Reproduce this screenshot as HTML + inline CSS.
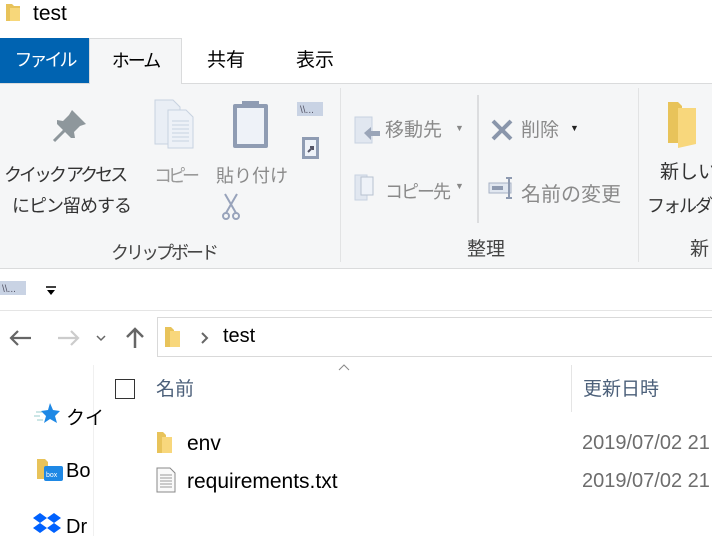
<!DOCTYPE html>
<html><head><meta charset="utf-8"><style>
*{margin:0;padding:0;box-sizing:border-box}
body{width:712px;height:536px;overflow:hidden;background:#fff;position:relative;font-family:"Liberation Sans","Noto Sans CJK JP",sans-serif;color:#000}
.a{position:absolute;white-space:nowrap}
.g{color:#6d6d6d}
.f{font-size:19px;line-height:22px}
</style></head><body>
<svg class="a" style="left:4px;top:3px" width="18" height="20"><path d="M2 1h6l2 2h6v15H2z" fill="#e8c35a"/><path d="M6 5h10v13H6z" fill="#f7d77a"/></svg>
<div class="a" style="left:33px;top:2px;font-size:21px">test</div>
<div class="a" style="left:0;top:38px;width:89px;height:45px;background:#0063b1;color:#fff;font-size:18px;letter-spacing:-3px;line-height:45px;text-align:center">ファイル</div>
<div class="a" style="left:89px;top:38px;width:93px;height:46px;background:#f5f6f7;border:1px solid #dadbdc;border-bottom:none;font-size:18px;letter-spacing:-2px;line-height:44px;text-align:center;z-index:2">ホーム</div>
<div class="a f" style="left:207px;top:50px">共有</div>
<div class="a f" style="left:296px;top:50px">表示</div>
<div class="a" style="left:0;top:83px;width:712px;height:186px;background:#f5f6f7;border-top:1px solid #dadbdc;border-bottom:1px solid #dadbdc"></div>
<div class="a" style="left:340px;top:88px;width:1px;height:174px;background:#e2e3e4"></div>
<div class="a" style="left:638px;top:88px;width:1px;height:174px;background:#e2e3e4"></div>
<div class="a" style="left:477px;top:95px;width:2px;height:128px;background:#dcdddf"></div>
<svg class="a" style="left:50px;top:105px" width="42" height="38"><path d="M4 36L18 22" stroke="#8e979c" stroke-width="3"/><path d="M22 5l14 14-6 2-6 6 1 6-4 0-14-14 0-4 6 1 6-6z" fill="#8e979c"/></svg>
<div class="a" style="left:4px;top:161px;font-size:18px;letter-spacing:-3px;color:#333">クイック アクセス</div>
<div class="a" style="left:12px;top:192px;font-size:18px;letter-spacing:-1px;color:#333">にピン留めする</div>
<svg class="a" style="left:154px;top:99px" width="45" height="50"><path d="M1 1h18l7 7v37H1z" fill="#e9eef5" stroke="#c8d2e0"/><path d="M14 11h18l7 7v31H14z" fill="#edf1f7" stroke="#c8d2e0"/><g stroke="#c8d2e0"><path d="M18 22h17M18 26h17M18 30h17M18 34h17M18 38h17M18 42h17"/></g></svg>
<div class="a" style="left:154px;top:162px;font-size:18px;letter-spacing:-4px;color:#9a9a9a">コピー</div>
<svg class="a" style="left:232px;top:98px" width="38" height="52"><rect x="1" y="6" width="35" height="44" rx="2" fill="#8f9cb3"/><rect x="5" y="10" width="27" height="36" fill="#eef2f8"/><rect x="10" y="3" width="17" height="6" fill="#8f9cb3"/></svg>
<div class="a" style="left:216px;top:162px;font-size:18px;color:#8a8a8a">貼り付け</div>
<svg class="a" style="left:297px;top:102px" width="26" height="16"><rect width="26" height="14" fill="#c9d3e4"/><text x="3" y="11" font-size="10" fill="#556">\\...</text></svg>
<svg class="a" style="left:301px;top:134px" width="20" height="26"><rect x="1" y="3" width="17" height="22" fill="#8f9cb3"/><rect x="4" y="6" width="11" height="16" fill="#eef2f8"/><path d="M7 18l5-5M9 13h3v3" stroke="#556" stroke-width="2" fill="none"/></svg>
<svg class="a" style="left:221px;top:193px" width="20" height="28"><g stroke="#98a3bb" stroke-width="2" fill="none"><path d="M4 1l11 19M16 1L5 20"/><circle cx="5" cy="23" r="3"/><circle cx="15" cy="23" r="3"/></g></svg>
<div class="a" style="left:111px;top:239px;font-size:18px;letter-spacing:-3px;color:#444">クリップボード</div>
<svg class="a" style="left:354px;top:116px" width="28" height="28"><rect x="1" y="1" width="17" height="26" fill="#e1e7f0" stroke="#c8d2e0"/><path d="M10 17l7-6v4h9v5h-9v4z" fill="#9aa5b8"/></svg>
<div class="a f" style="left:385px;top:120px;color:#8a8a8a">移動先</div>
<div class="a" style="left:455px;top:123px;font-size:9px;color:#888">▼</div>
<svg class="a" style="left:354px;top:174px" width="26" height="28"><rect x="1" y="1" width="12" height="25" fill="#e1e7f0" stroke="#c8d2e0"/><rect x="7" y="3" width="12" height="18" fill="#eef2f8" stroke="#b8c2d0"/></svg>
<div class="a" style="left:385px;top:178px;font-size:18px;letter-spacing:-2px;color:#8a8a8a">コピー先</div>
<div class="a" style="left:455px;top:181px;font-size:9px;color:#888">▼</div>
<svg class="a" style="left:490px;top:118px" width="24" height="24"><path d="M3 3l18 18M21 3L3 21" stroke="#8a96ab" stroke-width="4"/></svg>
<div class="a f" style="left:521px;top:120px;color:#8a8a8a">削除</div>
<div class="a" style="left:570px;top:123px;font-size:9px;color:#222">▼</div>
<svg class="a" style="left:488px;top:176px" width="28" height="26"><rect x="1" y="7" width="22" height="10" fill="#e1e7f0" stroke="#a8b2c4"/><rect x="4" y="10" width="11" height="4" fill="#8e9ab0"/><path d="M18 2h6M21 2v20M18 22h6" stroke="#8e9ab0" stroke-width="2"/></svg>
<div class="a" style="left:521px;top:178px;font-size:20px;color:#8a8a8a">名前の変更</div>
<div class="a f" style="left:467px;top:239px;color:#444">整理</div>
<svg class="a" style="left:666px;top:100px" width="36" height="50"><path d="M2 2h10l4 4v37H2z" fill="#e8c35a"/><path d="M12 8l18 0v36L12 48z" fill="#f8d77c"/></svg>
<div class="a f" style="left:660px;top:162px;color:#333">新しい</div>
<div class="a" style="left:647px;top:192px;font-size:18px;letter-spacing:-2px;color:#333">フォルダー</div>
<div class="a f" style="left:690px;top:239px;color:#444">新</div>
<svg class="a" style="left:0;top:281px" width="26" height="15"><rect width="26" height="14" fill="#c9d3e4"/><text x="2" y="11" font-size="10" fill="#556">\\...</text></svg>
<svg class="a" style="left:45px;top:286px" width="12" height="10"><path d="M1 1h10" stroke="#000" stroke-width="1.5"/><path d="M2 4h8l-4 5z" fill="#000"/></svg>
<div class="a" style="left:0;top:310px;width:712px;height:1px;background:#e5e5e5"></div>
<svg class="a" style="left:9px;top:329px" width="24" height="18"><path d="M2 9h20M9 2L2 9l7 7" stroke="#666" stroke-width="2.2" fill="none"/></svg>
<svg class="a" style="left:56px;top:329px" width="24" height="18"><path d="M2 9h20M15 2l7 7-7 7" stroke="#ccc" stroke-width="2.2" fill="none"/></svg>
<svg class="a" style="left:96px;top:334px" width="10" height="8"><path d="M1 2l4 4 4-4" stroke="#666" stroke-width="1.5" fill="none"/></svg>
<svg class="a" style="left:125px;top:327px" width="20" height="22"><path d="M10 21V3M2 10l8-8 8 8" stroke="#666" stroke-width="2.5" fill="none"/></svg>
<div class="a" style="left:157px;top:317px;width:560px;height:40px;border:1px solid #d9d9d9"></div>
<svg class="a" style="left:164px;top:326px" width="18" height="22"><path d="M1 1h6l3 3v17H1z" fill="#e8c35a"/><path d="M6 5h10v16H6z" fill="#f8d77c"/></svg>
<svg class="a" style="left:200px;top:332px" width="10" height="12"><path d="M2 1l5 5-5 5" stroke="#666" stroke-width="2" fill="none"/></svg>
<div class="a" style="left:223px;top:325px;font-size:20px">test</div>
<div class="a" style="left:93px;top:365px;width:1px;height:171px;background:#f0f0f0"></div>
<svg class="a" style="left:34px;top:402px" width="28" height="24"><path d="M16 1l3 7 7 1-5 5 2 7-7-4-6 4 2-7-5-5 7-1z" fill="#1e88e5"/><path d="M2 10h6M0 14h6M3 18h6" stroke="#9cc" stroke-width="1"/></svg>
<div class="a" style="left:66px;top:403px;font-size:19px">クイ</div>
<svg class="a" style="left:36px;top:458px" width="28" height="24"><path d="M1 1h8l3 3v17H1z" fill="#e8c35a"/><rect x="8" y="8" width="19" height="15" rx="2" fill="#1e88e5"/><text x="10" y="19" font-size="7" fill="#fff">box</text></svg>
<div class="a" style="left:66px;top:460px;font-size:20px">Bo</div>
<svg class="a" style="left:33px;top:512px" width="28" height="24"><path d="M7 1l7 5-7 5-7-5zM21 1l7 5-7 5-7-5zM7 11l7 5-7 5-7-5zM21 11l7 5-7 5-7-5z" fill="#0061fe"/></svg>
<div class="a" style="left:66px;top:516px;font-size:20px">Dr</div>
<svg class="a" style="left:338px;top:364px" width="12" height="8"><path d="M1 6l5-5 5 5" stroke="#888" fill="none"/></svg>
<div class="a" style="left:115px;top:379px;width:20px;height:20px;border:1px solid #333"></div>
<div class="a f" style="left:156px;top:379px;color:#4c607a">名前</div>
<div class="a" style="left:571px;top:365px;width:1px;height:47px;background:#e5e5e5"></div>
<div class="a f" style="left:583px;top:379px;color:#4c607a">更新日時</div>
<svg class="a" style="left:156px;top:431px" width="18" height="23"><path d="M1 1h6l3 3v18H1z" fill="#e8c35a"/><path d="M6 6h10v16H6z" fill="#f8d77c"/></svg>
<div class="a" style="left:187px;top:432px;font-size:21px">env</div>
<div class="a g" style="left:582px;top:432px;font-size:20px">2019/07/02 21</div>
<svg class="a" style="left:156px;top:467px" width="20" height="26"><path d="M1 1h13l5 5v19H1z" fill="#fafafa" stroke="#888"/><path d="M4 8h12M4 11h12M4 14h12M4 17h12M4 20h12" stroke="#999"/></svg>
<div class="a" style="left:187px;top:470px;font-size:21px">requirements.txt</div>
<div class="a g" style="left:582px;top:470px;font-size:20px">2019/07/02 21</div>
</body></html>
